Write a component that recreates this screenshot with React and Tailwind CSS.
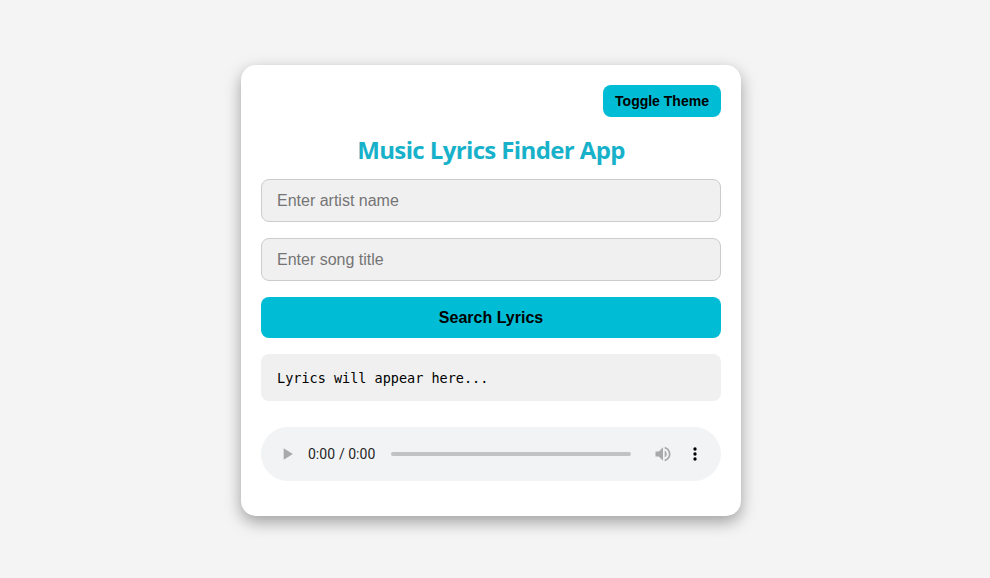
import React from "react";

export default function App() {
  return (
    <div className="min-h-[578px] w-full bg-[#f4f4f4] pt-[65px] pr-2" style={{ fontFamily: "'Liberation Sans', Arial, sans-serif" }}>
      <div className="mx-auto w-[500px] rounded-[15px] bg-white p-5 pb-[19px] shadow-[0_6px_16px_rgba(0,0,0,0.35)]">
        <div className="flex justify-end">
          <button className="h-8 w-[118px] rounded-[8px] bg-[#00bcd4] text-[14px] font-bold text-black">
            Toggle Theme
          </button>
        </div>
        <h1
          className="mt-[17px] mb-[13px] text-center text-[24px] font-bold leading-[32px] text-[#17b1ca]"
          style={{ fontFamily: "'Open Sans', 'Noto Sans', sans-serif", letterSpacing: "-0.62px" }}
        >
          Music Lyrics Finder App
        </h1>
        <input
          type="text"
          placeholder="Enter artist name"
          className="block h-[43px] w-full rounded-[8px] border border-[#cccccc] bg-[#f0f0f0] px-[15px] text-[16px] text-black placeholder:text-[#757575] outline-none"
        />
        <input
          type="text"
          placeholder="Enter song title"
          className="mt-4 block h-[43px] w-full rounded-[8px] border border-[#cccccc] bg-[#f0f0f0] px-[15px] text-[16px] text-black placeholder:text-[#757575] outline-none"
        />
        <button className="mt-4 block h-[41px] w-full rounded-[8px] bg-[#00bcd4] text-[16px] font-bold text-black">
          Search Lyrics
        </button>
        <div
          className="mt-4 flex h-[47px] items-center rounded-[8px] bg-[#f0f0f0] px-4 pt-[2px] text-[13.5px] text-black"
          style={{ fontFamily: "'DejaVu Sans Mono', monospace" }}
        >
          Lyrics will appear here...
        </div>
        <audio controls className="mt-[26px] mb-4 block h-[54px] w-full" />
      </div>
    </div>
  );
}
